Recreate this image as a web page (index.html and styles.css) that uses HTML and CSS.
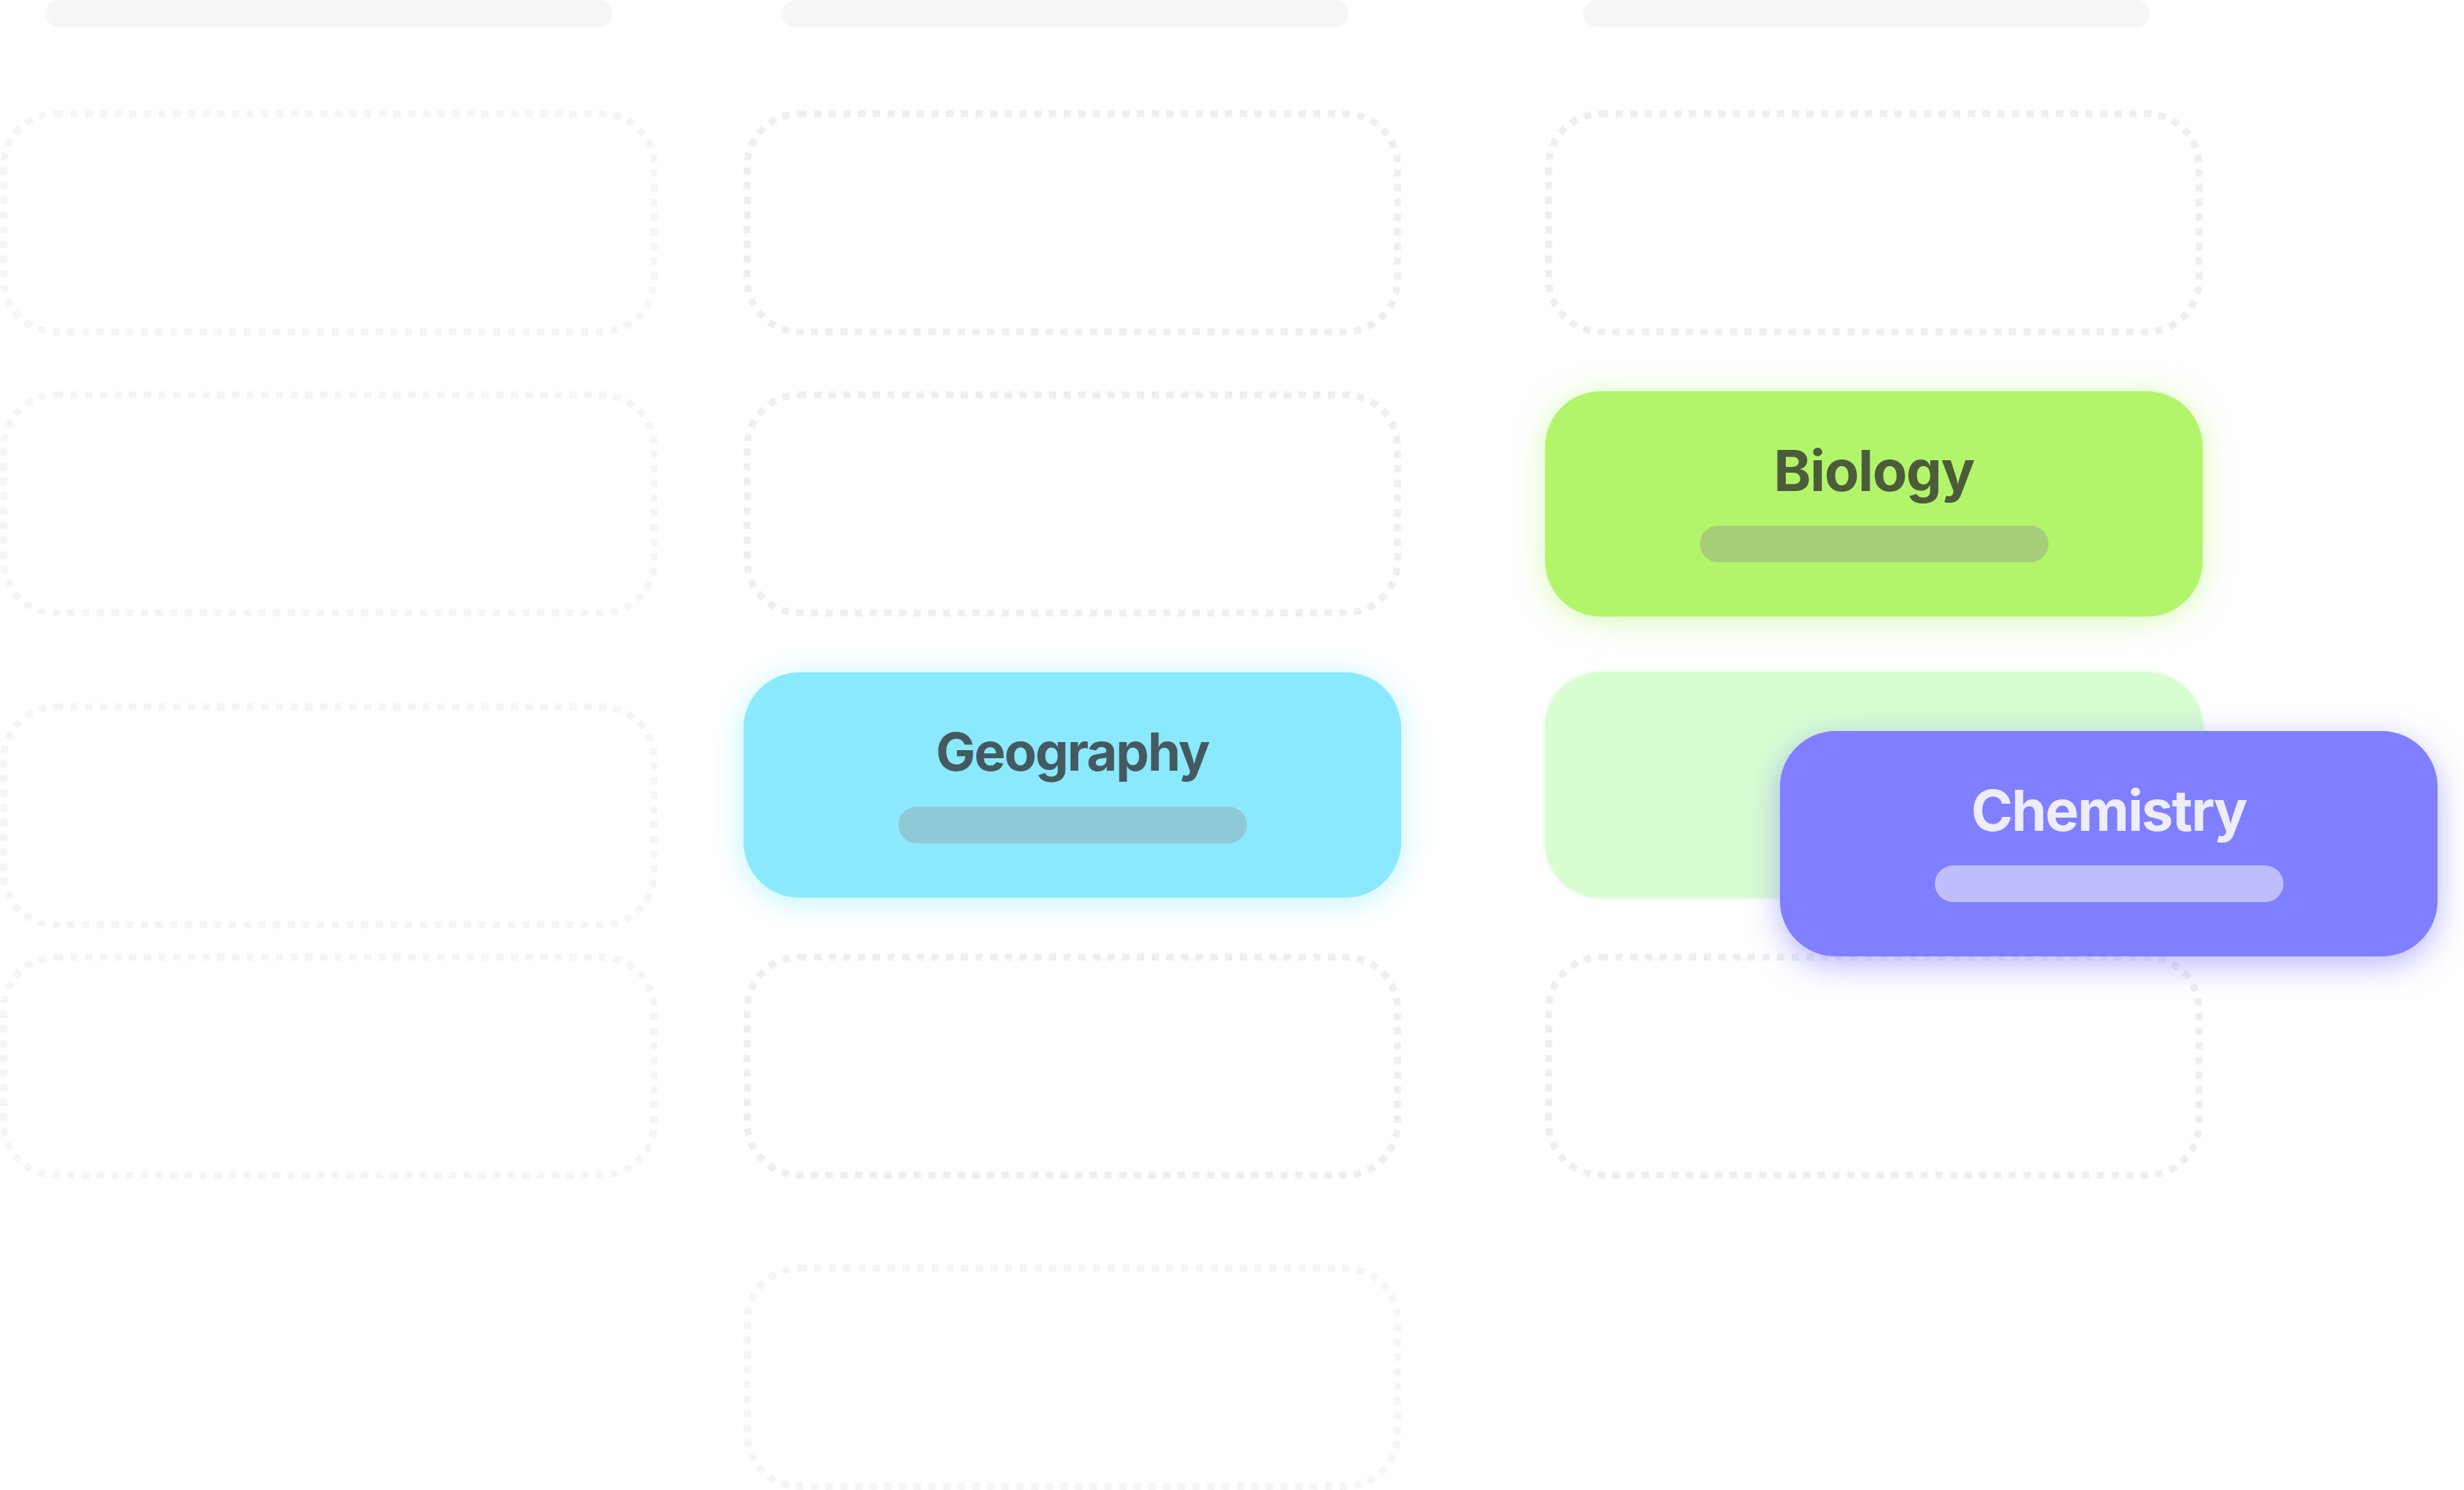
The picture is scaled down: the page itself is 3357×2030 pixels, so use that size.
FILE: index.html
```html
<!DOCTYPE html>
<html lang="en">
<head>
<meta charset="utf-8">
<title>Subjects board</title>
<link rel="stylesheet" href="styles.css">
</head>
<body>
<main class="board">
  <section class="column col-a">
    <div class="column-head"></div>
    <div class="stack">
      <div class="slot slot--faint"><svg class="slot-outline" viewBox="0 0 896 307" aria-hidden="true"><rect x="5" y="5" width="886" height="297" rx="71" ry="71"/></svg></div>
      <div class="slot slot--faint"><svg class="slot-outline" viewBox="0 0 896 307" aria-hidden="true"><rect x="5" y="5" width="886" height="297" rx="71" ry="71"/></svg></div>
      <div class="slot slot--faint slot--nudged"><svg class="slot-outline" viewBox="0 0 896 307" aria-hidden="true"><rect x="5" y="5" width="886" height="297" rx="71" ry="71"/></svg></div>
      <div class="slot slot--faint"><svg class="slot-outline" viewBox="0 0 896 307" aria-hidden="true"><rect x="5" y="5" width="886" height="297" rx="71" ry="71"/></svg></div>
    </div>
  </section>
  <section class="column col-b">
    <div class="column-head"></div>
    <div class="stack">
      <div class="slot"><svg class="slot-outline" viewBox="0 0 896 307" aria-hidden="true"><rect x="5" y="5" width="886" height="297" rx="71" ry="71"/></svg></div>
      <div class="slot"><svg class="slot-outline" viewBox="0 0 896 307" aria-hidden="true"><rect x="5" y="5" width="886" height="297" rx="71" ry="71"/></svg></div>
      <div class="card card--geo">
        <span class="card-title">Geography</span>
        <span class="card-bar"></span>
      </div>
      <div class="slot"><svg class="slot-outline" viewBox="0 0 896 307" aria-hidden="true"><rect x="5" y="5" width="886" height="297" rx="71" ry="71"/></svg></div>
      <div class="slot slot--faint slot--late"><svg class="slot-outline" viewBox="0 0 896 307" aria-hidden="true"><rect x="5" y="5" width="886" height="297" rx="71" ry="71"/></svg></div>
    </div>
  </section>
  <section class="column col-c">
    <div class="column-head"></div>
    <div class="stack">
      <div class="slot"><svg class="slot-outline" viewBox="0 0 896 307" aria-hidden="true"><rect x="5" y="5" width="886" height="297" rx="71" ry="71"/></svg></div>
      <div class="card card--bio">
        <span class="card-title">Biology</span>
        <span class="card-bar"></span>
      </div>
      <div class="drop-target"></div>
      <div class="slot"><svg class="slot-outline" viewBox="0 0 896 307" aria-hidden="true"><rect x="5" y="5" width="886" height="297" rx="71" ry="71"/></svg></div>
    </div>
    <div class="card card--chem card--dragging">
      <span class="card-title">Chemistry</span>
      <span class="card-bar"></span>
    </div>
  </section>
</main>
</body>
</html>
```

FILE: styles.css
```css
html, body {
  margin: 0;
  padding: 0;
  background: #ffffff;
  overflow: hidden;
}

body {
  font-family: Inter, "Noto Sans", "Liberation Sans", sans-serif;
}

.board {
  display: flex;
  align-items: flex-start;
  height: 2030px;
}

.column {
  flex: none;
  width: 896px;
}

.col-b {
  margin-left: 117px;
}

.col-c {
  margin-left: 196px;
  position: relative;
}

.column-head {
  width: 772px;
  height: 37px;
  margin-left: 52px;
  border-radius: 19px;
  background: #f6f6f6;
}

.col-a .column-head {
  margin-left: 62px;
}

.stack {
  margin-top: 113px;
  display: flex;
  flex-direction: column;
  gap: 76px;
}

.slot {
  position: relative;
  height: 307px;
}

.slot-outline {
  position: absolute;
  inset: 0;
  width: 100%;
  height: 100%;
}

.slot-outline rect {
  fill: none;
  stroke: #efefef;
  stroke-width: 9.5;
  stroke-dasharray: 10 10;
}

.slot--faint .slot-outline rect {
  stroke: #f5f5f5;
}

.slot--nudged {
  transform: translateY(42px);
}

.slot--late {
  margin-top: 41px;
}

.drop-target {
  box-sizing: border-box;
  height: 307px;
  border-radius: 76px;
  background: #d8fdd1;
  box-shadow: 0 0 6px rgba(150, 220, 150, 0.35);
}

.card {
  box-sizing: border-box;
  height: 307px;
  border-radius: 76px;
  padding-top: 70px;
  display: flex;
  flex-direction: column;
  align-items: center;
}

.card-title {
  font-size: 77px;
  line-height: 76px;
  font-weight: 700;
  letter-spacing: -1.9px;
  white-space: nowrap;
}

.card-bar {
  margin-top: 37px;
  width: 475px;
  height: 50px;
  border-radius: 25px;
}

.card--geo {
  background: #8be9fd;
  box-shadow: 0 6px 40px rgba(139, 233, 253, 0.55);
}

.card--geo .card-title {
  font-size: 72px;
  color: #445a60;
}

.card--geo .card-bar {
  background: #8ec9d8;
}

.card--bio {
  background: #b2f56b;
  box-shadow: 0 4px 40px rgba(178, 245, 107, 0.5);
}

.card--bio .card-title {
  color: #4c5b3a;
  letter-spacing: -1.3px;
}

.card--bio .card-bar {
  background: #a6ce78;
}

.card--chem {
  background: #7f7fff;
  box-shadow: 0 12px 44px rgba(127, 127, 255, 0.55);
}

.card--chem .card-title {
  color: #ededfd;
}

.card--chem .card-bar {
  background: #bebeff;
}

.card--dragging {
  position: absolute;
  left: 320px;
  top: 996px;
  width: 896px;
  z-index: 2;
}
```
